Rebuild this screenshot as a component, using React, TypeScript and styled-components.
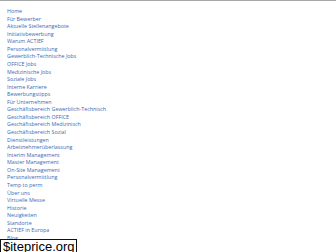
import React from "react";
import styled, { createGlobalStyle } from "styled-components";

const Global = createGlobalStyle`
  html, body { margin: 0; padding: 0; background: #ffffff; }
  body { width: 336px; height: 252px; overflow: hidden; }
`;

const Page = styled.div`
  position: relative;
  width: 336px;
  height: 252px;
  overflow: hidden;
  border-top: 1px solid #a8a8a8;
  box-sizing: border-box;
  background: #fff;
`;

const NavList = styled.ul`
  list-style: none;
  margin: 0;
  padding: 7px 0 0 7px;
  font-family: "Open Sans", "Liberation Sans", sans-serif;
  font-size: 5.35px;
  line-height: 7.56px;
`;

const NavItem = styled.li`
  margin: 0;
  padding: 0;
  white-space: nowrap;
`;

const NavLink = styled.a`
  color: #3d69b4;
  text-decoration: none;
`;

const Watermark = styled.div`
  position: absolute;
  left: 0;
  top: 238px;
  width: 77px;
  height: 16px;
  box-sizing: border-box;
  border: 1px solid #111;
  background: #fff;
  color: #000;
  font-family: "Liberation Sans", Arial, sans-serif;
  font-size: 13px;
  line-height: 14px;
  padding: 0 0 0 2px;
  white-space: nowrap;
`;

const items = [
  "Home",
  "Für Bewerber",
  "Aktuelle Stellenangebote",
  "Initiativbewerbung",
  "Warum ACTIEF",
  "Personalvermittlung",
  "Gewerblich-Technische Jobs",
  "OFFICE Jobs",
  "Medizinische Jobs",
  "Soziale Jobs",
  "Interne Karriere",
  "Bewerbungstipps",
  "Für Unternehmen",
  "Geschäftsbereich Gewerblich-Technisch",
  "Geschäftsbereich OFFICE",
  "Geschäftsbereich Medizinisch",
  "Geschäftsbereich Sozial",
  "Dienstleistungen",
  "Arbeitnehmerüberlassung",
  "Interim Management",
  "Master Management",
  "On-Site Management",
  "Personalvermittlung",
  "Temp to perm",
  "Über uns",
  "Virtuelle Messe",
  "Historie",
  "Neuigkeiten",
  "Standorte",
  "ACTIEF in Europa",
  "Blog",
];

export default function App() {
  return (
    <>
      <Global />
      <Page>
        <NavList>
          {items.map((t, i) => (
            <NavItem key={i}>
              <NavLink href="#">{t}</NavLink>
            </NavItem>
          ))}
        </NavList>
        <Watermark>$iteprice.org</Watermark>
      </Page>
    </>
  );
}
